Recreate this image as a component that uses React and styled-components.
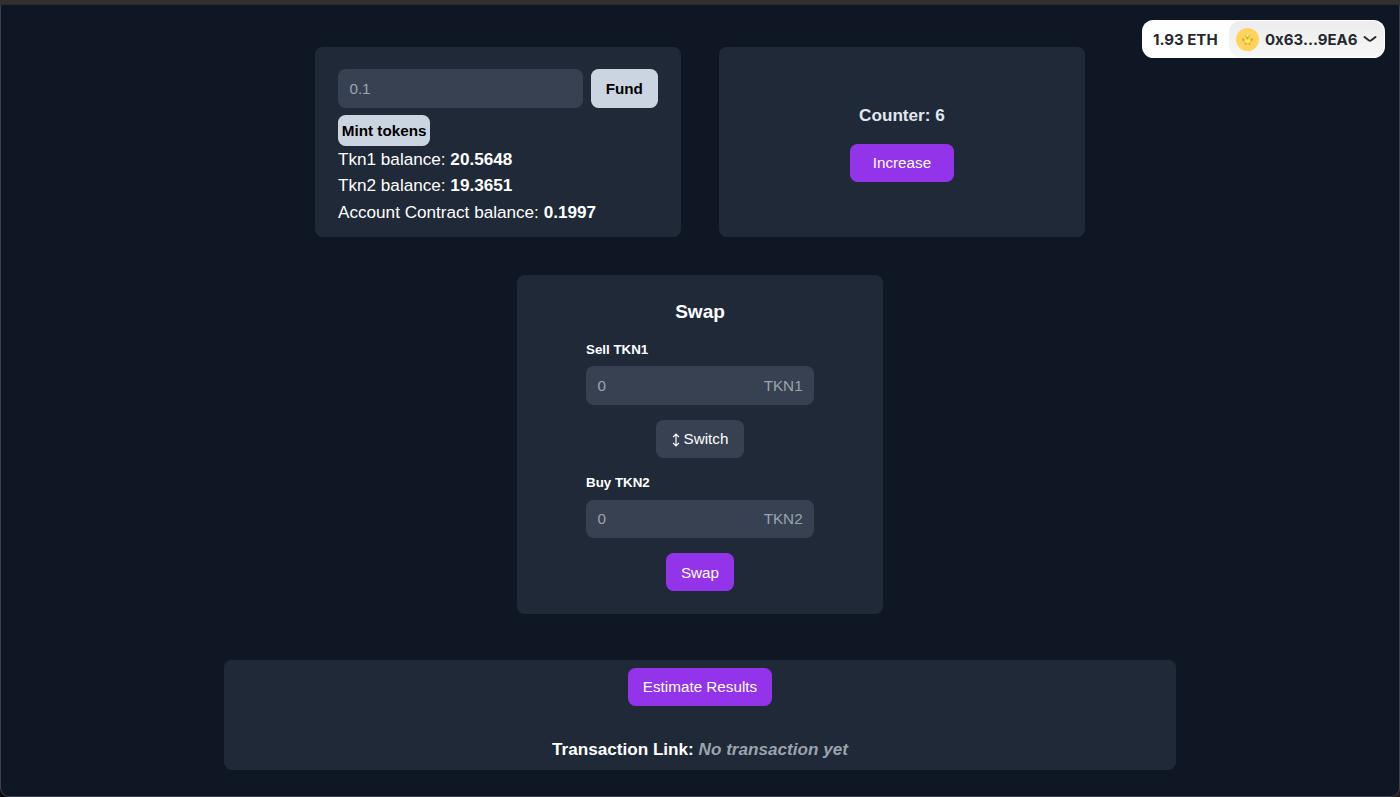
import { useState } from 'react';
import styled, { createGlobalStyle, css } from 'styled-components';

const GlobalStyle = createGlobalStyle`
    * {
        box-sizing: border-box;
    }

    body {
        margin: 0;
        background: linear-gradient(90deg, #08090d 50%, #2b1a1a 50%);
        color: #ffffff;
        font-family: 'Liberation Sans', Arial, sans-serif;
        font-size: 15.24px;
    }

    button,
    input {
        font: inherit;
    }
`;

const Window = styled.div`
    height: 797px;
    display: flex;
    flex-direction: column;
    overflow: hidden;
`;

const TitleBar = styled.div`
    flex: none;
    height: 5px;
    background: #303030;
    border-bottom: 1px solid #292b2e;
`;

const Page = styled.main`
    position: relative;
    flex: 1;
    display: flex;
    flex-direction: column;
    align-items: center;
    padding-top: 41.7px;
    background: #0f1624;
    border: 1px solid #3b424e;
    border-top: none;
    border-radius: 0 0 9px 9px;
`;

const TopRow = styled.div`
    display: flex;
    gap: 38.2px;
`;

const Card = styled.section`
    width: 365.7px;
    height: ${({ $height }) => $height}px;
    padding: 22.8px;
    background: #1f2937;
    border-radius: 7.6px;
`;

const CounterCard = styled(Card)`
    display: flex;
    flex-direction: column;
    align-items: center;
    justify-content: center;
    gap: 15.2px;
`;

const SwapCard = styled(Card)`
    display: flex;
    flex-direction: column;
    align-items: center;
    margin-top: 38.5px;
`;

const ResultCard = styled(Card)`
    display: flex;
    flex-direction: column;
    align-items: center;
    width: 952px;
    margin-top: 46px;
    padding: 7.6px 0 0;
`;

const FundRow = styled.div`
    display: flex;
    gap: 7.6px;
    margin-bottom: 7.6px;
`;

const field = css`
    height: 38.1px;
    background: #374151;
    border: none;
    border-radius: 7.6px;
    color: #9ca3af;
`;

const FundInput = styled.input`
    ${field}
    flex: 1;
    min-width: 0;
    padding: 0 11.4px;
    outline: none;

    &::placeholder {
        color: #9ca3af;
    }
`;

const LightButton = styled.button`
    height: ${({ $small }) => ($small ? 30.5 : 38.1)}px;
    padding: 0 ${({ $small }) => ($small ? 3.8 : 15.2)}px;
    display: block;
    background: #cbd5e1;
    border: none;
    border-radius: 7.6px;
    color: #000000;
    font-weight: 700;
`;

const PurpleButton = styled.button`
    height: 38.1px;
    padding: 0 ${({ $wide }) => ($wide ? 22.8 : 15.2)}px;
    background: #9333ea;
    border: none;
    border-radius: 7.6px;
    color: #ffffff;
`;

const SwitchButton = styled.button`
    ${field}
    display: flex;
    align-items: center;
    gap: 4px;
    margin: 15.2px 0;
    padding: 0 15.2px;
    color: #ffffff;
`;

const Balance = styled.p`
    margin: 0;
    font-size: 17.14px;
    line-height: 26.67px;
`;

const CounterText = styled.p`
    margin: 0;
    color: #e2e8f0;
    font-size: 17.14px;
    font-weight: 700;
    line-height: 26.67px;
`;

const SwapTitle = styled.h2`
    margin: 0 0 13.9px;
    padding-top: 1px;
    font-size: 19.05px;
    line-height: 26.67px;
`;

const FieldGroup = styled.label`
    display: flex;
    flex-direction: column;
    gap: 7.6px;
    width: 228px;
`;

const FieldLabel = styled.span`
    font-size: 13.33px;
    font-weight: 700;
    line-height: 19.05px;
`;

const TokenField = styled.span`
    ${field}
    display: flex;
    align-items: center;
    justify-content: space-between;
    padding: 0 11.4px;
`;

const SubmitButton = styled(PurpleButton)`
    margin-top: 15.2px;
`;

const SwitchIcon = styled.svg`
    position: relative;
    top: 1px;
    width: 8px;
    height: 14px;
    fill: none;
    stroke: currentColor;
    stroke-width: 1.2;
`;

const TransactionText = styled.p`
    margin: 30.3px 0 0;
    font-size: 17.14px;
    font-weight: 700;
    line-height: 26.67px;

    em {
        color: #9ca3af;
    }
`;

const Wallet = styled.div`
    position: absolute;
    top: 15px;
    right: 14px;
    display: flex;
    align-items: center;
    height: 38px;
    width: 243px;
    background: #ffffff;
    border-radius: 11.4px;
    color: #25292e;
    font-family: Inter, sans-serif;
    font-size: 15px;
    font-weight: 700;
    white-space: nowrap;
`;

const WalletBalance = styled.span`
    width: 87px;
    padding-left: 11px;
`;

const Account = styled.div`
    display: flex;
    align-items: center;
    gap: 6px;
    flex: 1;
    height: 36px;
    margin-right: 1px;
    padding-left: 7px;
    background: linear-gradient(#ececed, #f7f7f7);
    border-radius: 11.4px;
`;

const Avatar = styled.svg`
    flex: none;
    width: 23px;
    height: 23px;
`;

const Chevron = styled.svg`
    flex: none;
    width: 14px;
    height: 8px;
    margin-left: -1px;
    fill: none;
    stroke: currentColor;
    stroke-width: 2;
    stroke-linecap: round;
    stroke-linejoin: round;
`;

function ChickAvatar() {
    return (
        <Avatar viewBox="0 0 23 23">
            <circle cx="11.5" cy="11.5" r="11.5" fill="#ffd35c" />
            <path
                d="M10 15.3 9.2 17M13 15.3l.8 1.7"
                stroke="#d9752b"
                strokeWidth=".8"
            />
            <path
                d="M5.8 10.6c1.6-.1 2.7.3 3.5 1l-.4 2.2c-1.8 0-2.9-1.3-3.1-3.2zM17.2 10.6c-1.6-.1-2.7.3-3.5 1l.4 2.2c1.8 0 2.9-1.3 3.1-3.2z"
                fill="#e59a32"
            />
            <ellipse cx="11.5" cy="13" rx="3.6" ry="3" fill="#e8a934" />
            <ellipse cx="11.5" cy="12.6" rx="3.1" ry="2.7" fill="#fff04c" />
            <circle cx="11.5" cy="8.8" r="2.9" fill="#e9c840" />
            <circle cx="11.5" cy="8.6" r="2.4" fill="#fff275" />
            <path d="M10 9.2h3l-1.5 1.7z" fill="#df642b" />
            <circle cx="10.1" cy="8" r=".5" fill="#445447" />
            <circle cx="12.9" cy="8" r=".5" fill="#445447" />
        </Avatar>
    );
}

function TokenInput({ action, token }) {
    return (
        <FieldGroup>
            <FieldLabel>
                {action} {token}
            </FieldLabel>
            <TokenField>
                <span>0</span>
                <span>{token}</span>
            </TokenField>
        </FieldGroup>
    );
}

function App() {
    const [counter, setCounter] = useState(6);
    const [tokens, setTokens] = useState(['TKN1', 'TKN2']);

    return (
        <Window>
            <GlobalStyle />
            <TitleBar />
            <Page>
                <TopRow>
                    <Card $height={190.3}>
                        <FundRow>
                            <FundInput placeholder="0.1" />
                            <LightButton>Fund</LightButton>
                        </FundRow>
                        <LightButton $small>Mint tokens</LightButton>
                        <Balance>
                            Tkn1 balance: <b>20.5648</b>
                        </Balance>
                        <Balance>
                            Tkn2 balance: <b>19.3651</b>
                        </Balance>
                        <Balance>
                            Account Contract balance: <b>0.1997</b>
                        </Balance>
                    </Card>
                    <CounterCard $height={190.3}>
                        <CounterText>Counter: {counter}</CounterText>
                        <PurpleButton
                            $wide
                            onClick={() => setCounter(counter + 1)}
                        >
                            Increase
                        </PurpleButton>
                    </CounterCard>
                </TopRow>
                <SwapCard $height={338.5}>
                    <SwapTitle>Swap</SwapTitle>
                    <TokenInput action="Sell" token={tokens[0]} />
                    <SwitchButton
                        onClick={() => setTokens([tokens[1], tokens[0]])}
                    >
                        <SwitchIcon viewBox="0 0 8 14">
                            <path d="M4 1.4v11.2M1 4.2l3-3 3 3M1 9.8l3 3 3-3" />
                        </SwitchIcon>
                        Switch
                    </SwitchButton>
                    <TokenInput action="Buy" token={tokens[1]} />
                    <SubmitButton>Swap</SubmitButton>
                </SwapCard>
                <ResultCard $height={110}>
                    <PurpleButton>Estimate Results</PurpleButton>
                    <TransactionText>
                        Transaction Link: <em>No transaction yet</em>
                    </TransactionText>
                </ResultCard>
                <Wallet>
                    <WalletBalance>1.93 ETH</WalletBalance>
                    <Account>
                        <ChickAvatar />
                        <span>0x63...9EA6</span>
                        <Chevron viewBox="0 0 14 8">
                            <path d="M1.5 2 5.7 5.2q1.3.9 2.6 0L12.5 2" />
                        </Chevron>
                    </Account>
                </Wallet>
            </Page>
        </Window>
    );
}

export default App;
